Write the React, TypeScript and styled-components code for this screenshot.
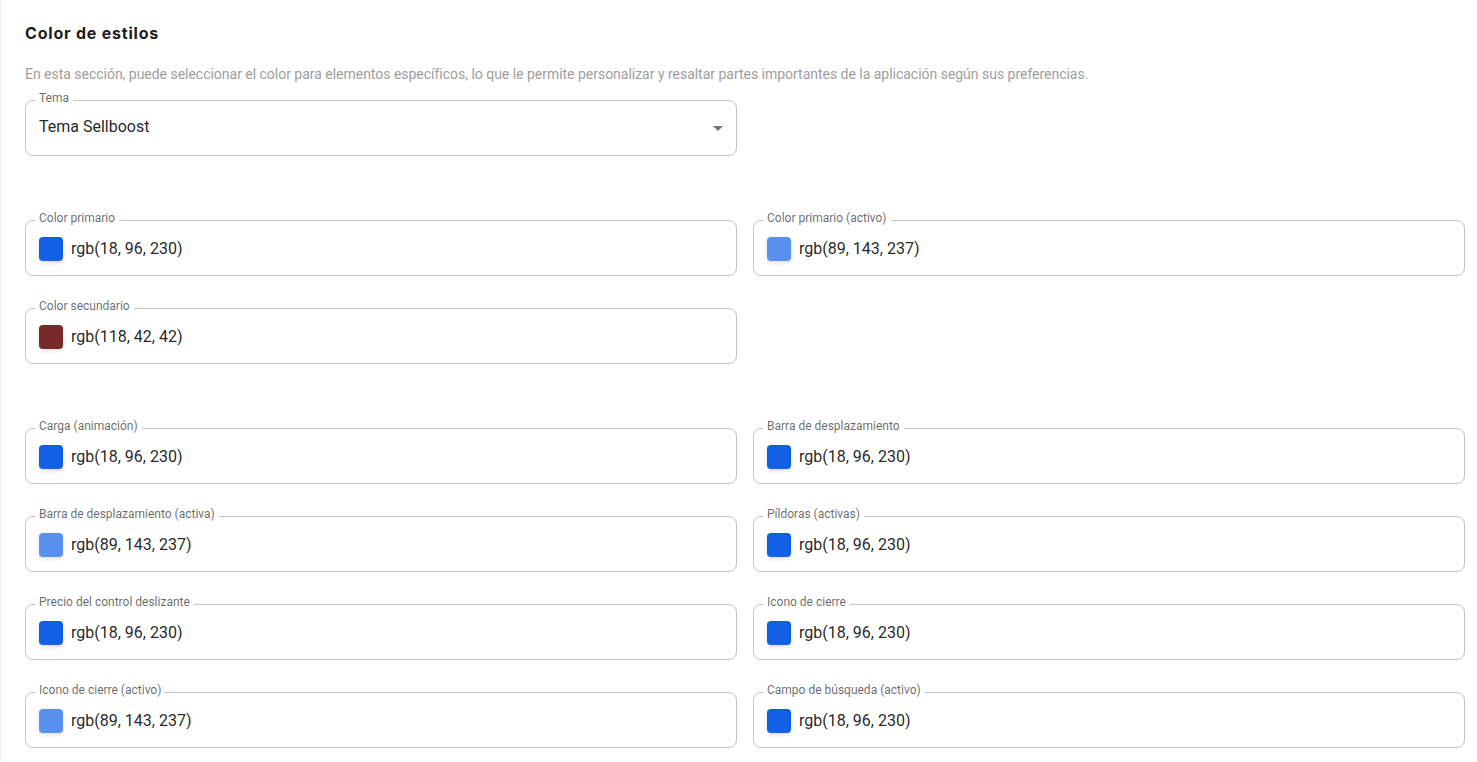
import React from "react";
import styled, { createGlobalStyle } from "styled-components";

const GlobalStyle = createGlobalStyle`
  html, body {
    margin: 0;
    padding: 0;
    background: #ffffff;
  }
  body {
    font-family: Roboto, "Liberation Sans", Arial, sans-serif;
    -webkit-font-smoothing: antialiased;
  }
  * {
    box-sizing: border-box;
  }
`;

const Page = styled.main`
  min-height: 762px;
  border-left: 1px solid #f2f2f2;
  padding: 21px 12px 0 24px;
`;

const Title = styled.h2`
  margin: 0;
  font-family: Inter, "Noto Sans", sans-serif;
  font-weight: 700;
  font-size: 16px;
  line-height: 24px;
  letter-spacing: 0.8px;
  color: #1c1c1c;
`;

const Description = styled.p`
  margin: 19px 0 0;
  font-size: 14px;
  line-height: 20px;
  letter-spacing: -0.02px;
  color: #9e9e9e;
`;

const Grid = styled.div<{ $top: number }>`
  display: grid;
  grid-template-columns: repeat(2, 712px);
  column-gap: 16px;
  row-gap: 32px;
  margin-top: ${(p) => p.$top}px;
`;

/* $nudge moves the inner content down (positive) or up (negative) by a pixel */
const Field = styled.div<{ $nudge?: number }>`
  position: relative;
  height: 56px;
  border: 1px solid #c4c4c4;
  border-radius: 8px;
  display: flex;
  align-items: center;
  padding: ${(p) => (p.$nudge && p.$nudge > 0 ? p.$nudge * 2 : 0)}px 13px
    ${(p) => (p.$nudge && p.$nudge < 0 ? -p.$nudge * 2 : 0)}px;
  background: #ffffff;
`;

const Label = styled.span`
  position: absolute;
  top: -10px;
  left: 9px;
  padding: 0 4px;
  background: #ffffff;
  font-size: 12px;
  line-height: 14px;
  color: rgba(0, 0, 0, 0.6);
  white-space: nowrap;
`;

const Value = styled.span`
  font-size: 16px;
  line-height: 24px;
  color: rgba(0, 0, 0, 0.87);
`;

const Swatch = styled.span<{ $color: string }>`
  width: 24px;
  height: 24px;
  border-radius: 4px;
  background: ${(p) => p.$color};
  box-shadow: 0 2px 4px rgba(0, 0, 0, 0.12);
  margin-right: 8px;
  flex-shrink: 0;
`;

const Caret = styled.svg`
  position: absolute;
  right: 6px;
  top: 50%;
  margin-top: -12px;
  width: 24px;
  height: 24px;
  fill: rgba(0, 0, 0, 0.54);
`;

type ColorItem = { label: string; rgb: [number, number, number] };

const BLUE: [number, number, number] = [18, 96, 230];
const LIGHT: [number, number, number] = [89, 143, 237];

const mainColors: ColorItem[] = [
  { label: "Color primario", rgb: BLUE },
  { label: "Color primario (activo)", rgb: LIGHT },
  { label: "Color secundario", rgb: [118, 42, 42] },
];

const widgetColors: ColorItem[] = [
  { label: "Carga (animación)", rgb: BLUE },
  { label: "Barra de desplazamiento", rgb: BLUE },
  { label: "Barra de desplazamiento (activa)", rgb: LIGHT },
  { label: "Píldoras (activas)", rgb: BLUE },
  { label: "Precio del control deslizante", rgb: BLUE },
  { label: "Icono de cierre", rgb: BLUE },
  { label: "Icono de cierre (activo)", rgb: LIGHT },
  { label: "Campo de búsqueda (activo)", rgb: BLUE },
];

function ColorField({ label, rgb }: ColorItem) {
  const text = `rgb(${rgb[0]}, ${rgb[1]}, ${rgb[2]})`;
  return (
    <Field $nudge={1}>
      <Label>{label}</Label>
      <Swatch $color={text} />
      <Value>{text}</Value>
    </Field>
  );
}

export default function App() {
  return (
    <>
      <GlobalStyle />
      <Page>
        <Title>Color de estilos</Title>
        <Description>
          En esta sección, puede seleccionar el color para elementos específicos, lo que le permite
          personalizar y resaltar partes importantes de la aplicación según sus preferencias.
        </Description>

        <Grid $top={16}>
          <Field $nudge={-1}>
            <Label>Tema</Label>
            <Value>Tema Sellboost</Value>
            <Caret viewBox="0 0 24 24">
              <path d="M7 10l5 5 5-5z" />
            </Caret>
          </Field>
        </Grid>

        <Grid $top={64}>
          {mainColors.map((c) => (
            <ColorField key={c.label} {...c} />
          ))}
        </Grid>

        <Grid $top={64}>
          {widgetColors.map((c) => (
            <ColorField key={c.label} {...c} />
          ))}
        </Grid>
      </Page>
    </>
  );
}
